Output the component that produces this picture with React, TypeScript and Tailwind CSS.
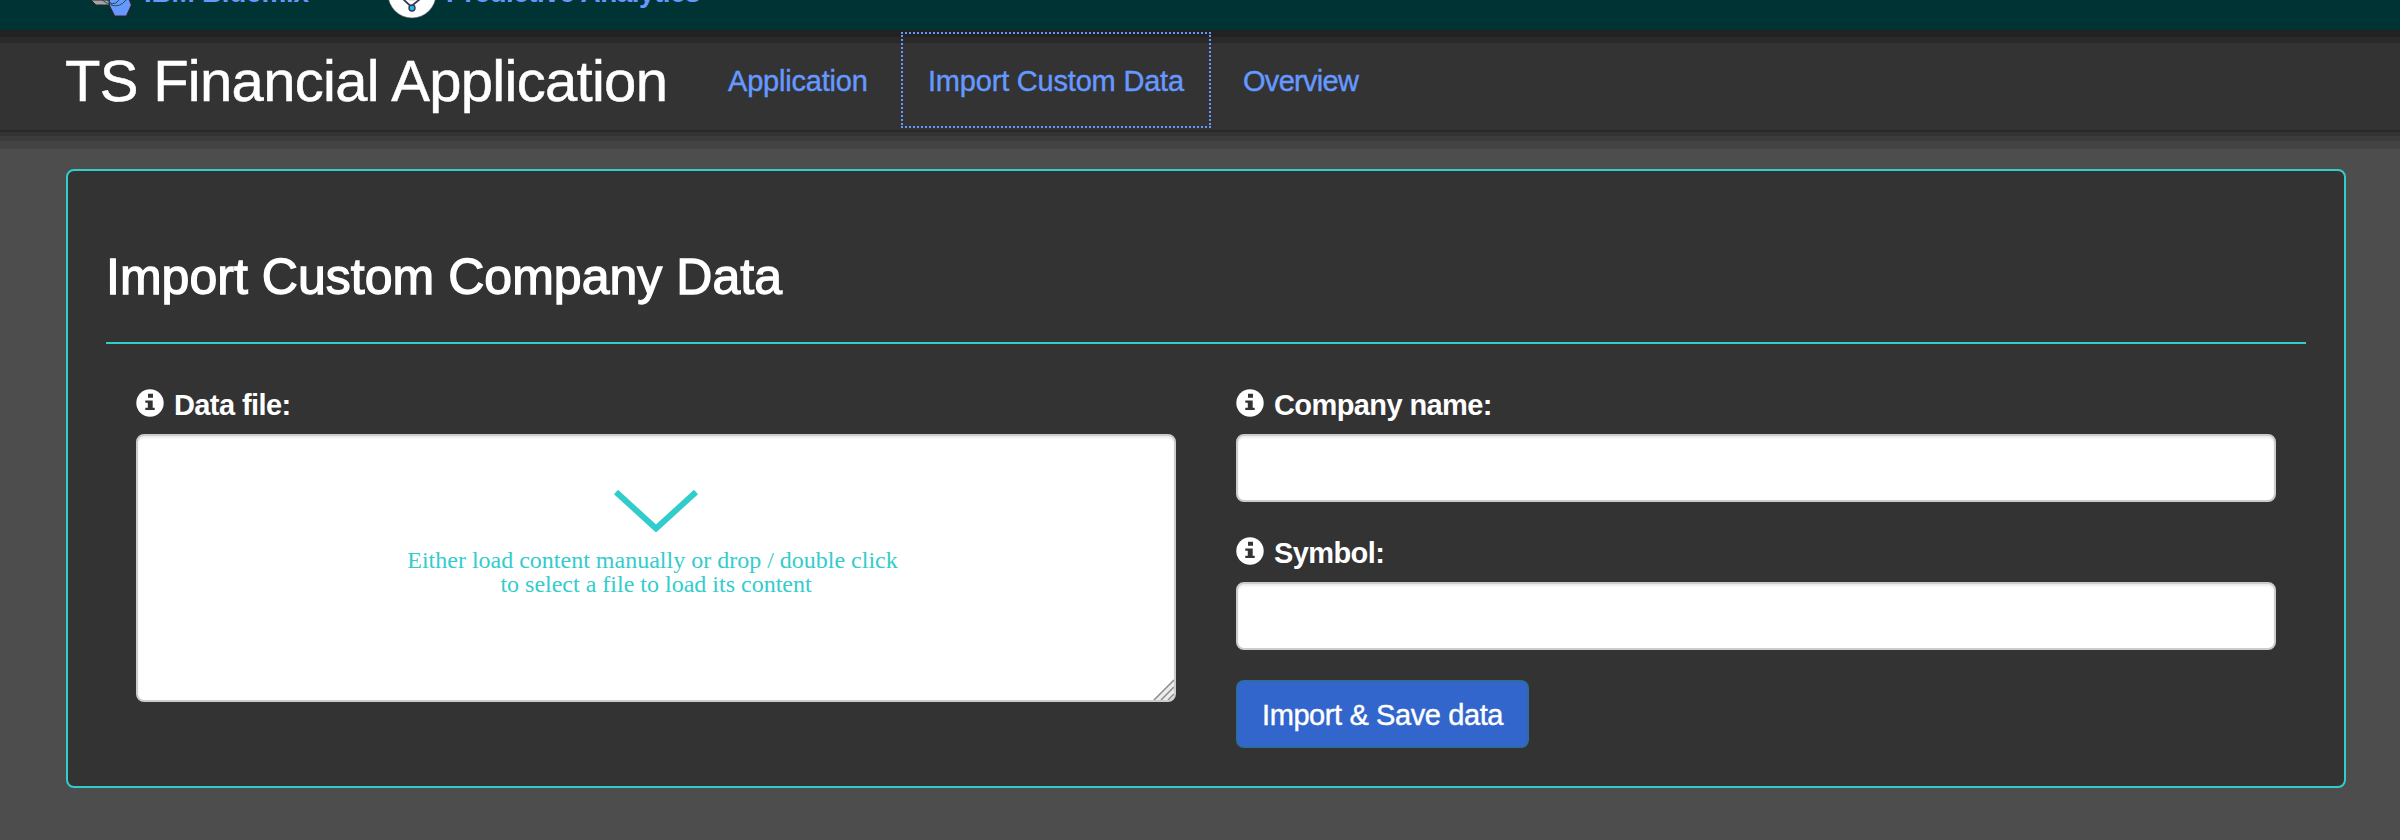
import React from "react";

const InfoIcon = () => (
  <svg className="-mt-px h-7 w-7 shrink-0" viewBox="0 0 28 28">
    <circle cx="14" cy="14" r="13.7" fill="#fff" />
    <path d="M12 4.700h5v4h-5zM9.300 11.500h7.400v7.200h2V21H9.300v-2.300h2.500v-4.900H9.300z" fill="#333" />
  </svg>
);

const Label = ({ children }: { children: React.ReactNode }) => (
  <div className="flex h-10 items-start gap-[10px] text-[29px] leading-10 font-bold tracking-[-0.6px] text-white">
    <InfoIcon />
    <span className="-mt-[5px]">{children}</span>
  </div>
);

const field =
  "block w-full resize-none rounded-lg border-2 border-[#ccc] bg-white shadow-[inset_0_2px_2px_rgba(0,0,0,0.075)] outline-none";

const BluemixLogo = () => (
  <svg className="h-[17px] w-[44px]" viewBox="0 0 44 17">
    <path d="M0 0l5 5h13l4-5z" fill="#a6a3a6" stroke="#332326" strokeWidth="1" />
    <path d="M18 -4H37L40.5 5l-5 11H23.500L18.500 6z" fill="#69f" stroke="#332326" strokeWidth="1.2" />
    <path d="M11 0q5 4 9 4M20 5q9 3 15-5M20 4q6 0 8-4M16 0l5 4" fill="none" stroke="#244d55" strokeWidth="1" />
  </svg>
);

const AnalyticsLogo = () => (
  <svg className="h-[19px] w-[48px]" viewBox="0 0 48 19">
    <circle cx="24" cy="-6" r="24" fill="#fff" stroke="#555" strokeWidth="0.6" />
    <path d="M15 -1l8 7.500L32 -1" fill="none" stroke="#333a55" strokeWidth="1.800" />
    <path d="M21 0h6" stroke="#bbc" strokeWidth="1" />
    <circle cx="24" cy="8" r="3" fill="#1fb6e8" stroke="#333a55" strokeWidth="1.400" />
  </svg>
);

export default function App() {
  return (
    <div className="flex h-[840px] w-[2400px] flex-col overflow-hidden bg-[#4d4d4d] font-['Liberation_Sans',Arial,sans-serif]">
      <header className="flex h-[30px] shrink-0 items-start overflow-hidden bg-[#033] pl-[91px] text-[28px] leading-8 font-bold text-[#69f]">
        <BluemixLogo />
        <span className="-mt-[23px] ml-[9px] w-[244px] tracking-[-0.3px] whitespace-nowrap">IBM Bluemix</span>
        <AnalyticsLogo />
        <span className="-mt-[23px] ml-[10px] tracking-[-0.55px] whitespace-nowrap">Predictive Analytics</span>
      </header>

      <nav className="flex h-[102px] shrink-0 items-start border-b-2 border-[#292929] bg-[linear-gradient(#222_0_7px,#2a2a2a_7px_13px,#333_13px)] pl-[65px] text-[29px] leading-[98px] tracking-[-0.2px] text-[#69f] [-webkit-text-stroke:0.4px_#69f]">
        <h1 className="mt-[3px] w-[637px] shrink-0 text-[58px] leading-[96px] tracking-[-0.7px] whitespace-nowrap text-white [-webkit-text-stroke:0.5px_white]">
          TS Financial Application
        </h1>
        <a className="mt-[2px] w-[199px] pl-[26px]">Application</a>
        <a className="mt-[2px] h-24 w-[310px] border-2 border-dotted border-[#69f] pl-[25px] leading-[94px]">
          Import Custom Data
        </a>
        <a className="mt-[2px] pl-[32px] tracking-[-0.7px]">Overview</a>
      </nav>
      <div className="h-[17px] shrink-0 bg-[linear-gradient(#333_0_4px,#3b3b3b_4px_9px,#434343_9px)]" />

      <main className="mt-5 ml-[66px] h-[619px] w-[2280px] shrink-0 rounded-lg border-2 border-[#3cc] bg-[#333] px-[38px]">
        <h2 className="h-[173px] border-b-2 border-[#3cc] pt-[76px] text-[50px] leading-[60px] tracking-[0.03px] text-white [-webkit-text-stroke:1.3px_white]">
          Import Custom Company Data
        </h2>
        <div className="flex gap-[60px] px-[30px] pt-[46px]">
          <section className="w-[1040px]">
            <Label>Data file:</Label>
            <div className="relative mt-1">
              <div className={`${field} flex h-[268px] flex-col items-center pt-[54px] font-['Liberation_Serif',serif] text-[24px] leading-6 text-[#3cc]`}>
                <svg className="h-[42px] w-[84px]" viewBox="0 0 84 42">
                  <path d="M2 2l40 36.500L82 2" fill="none" stroke="#3cc" strokeWidth="6" />
                </svg>
                <div className="mt-[16px] pr-[7px] whitespace-nowrap">
                  Either load content manually or drop / double click
                </div>
                <div className="whitespace-nowrap">to select a file to load its content</div>
              </div>
              <svg className="absolute right-[2px] bottom-[2px] h-[21px] w-[21px]" viewBox="0 0 21 21">
                <path d="M0 21L21 0V17L17 21z" fill="#ececec" />
                <path d="M1 21L21 1M8 21L21 8M15 21L21 15" stroke="#8c8c8c" strokeWidth="1.500" />
              </svg>
            </div>
          </section>
          <section className="w-[1040px]">
            <Label>Company name:</Label>
            <input className={`${field} mt-1 h-[68px]`} />
            <div className="mt-9">
              <Label>Symbol:</Label>
            </div>
            <input className={`${field} mt-1 h-[68px]`} />
            <button className="mt-[30px] h-[68px] w-[293px] rounded-lg border-2 border-[#2e6da4] bg-[#36c] pt-[2px] text-[29px] leading-[62px] tracking-[-0.4px] whitespace-nowrap text-white [-webkit-text-stroke:0.4px_white]">
              Import &amp; Save data
            </button>
          </section>
        </div>
      </main>
    </div>
  );
}
